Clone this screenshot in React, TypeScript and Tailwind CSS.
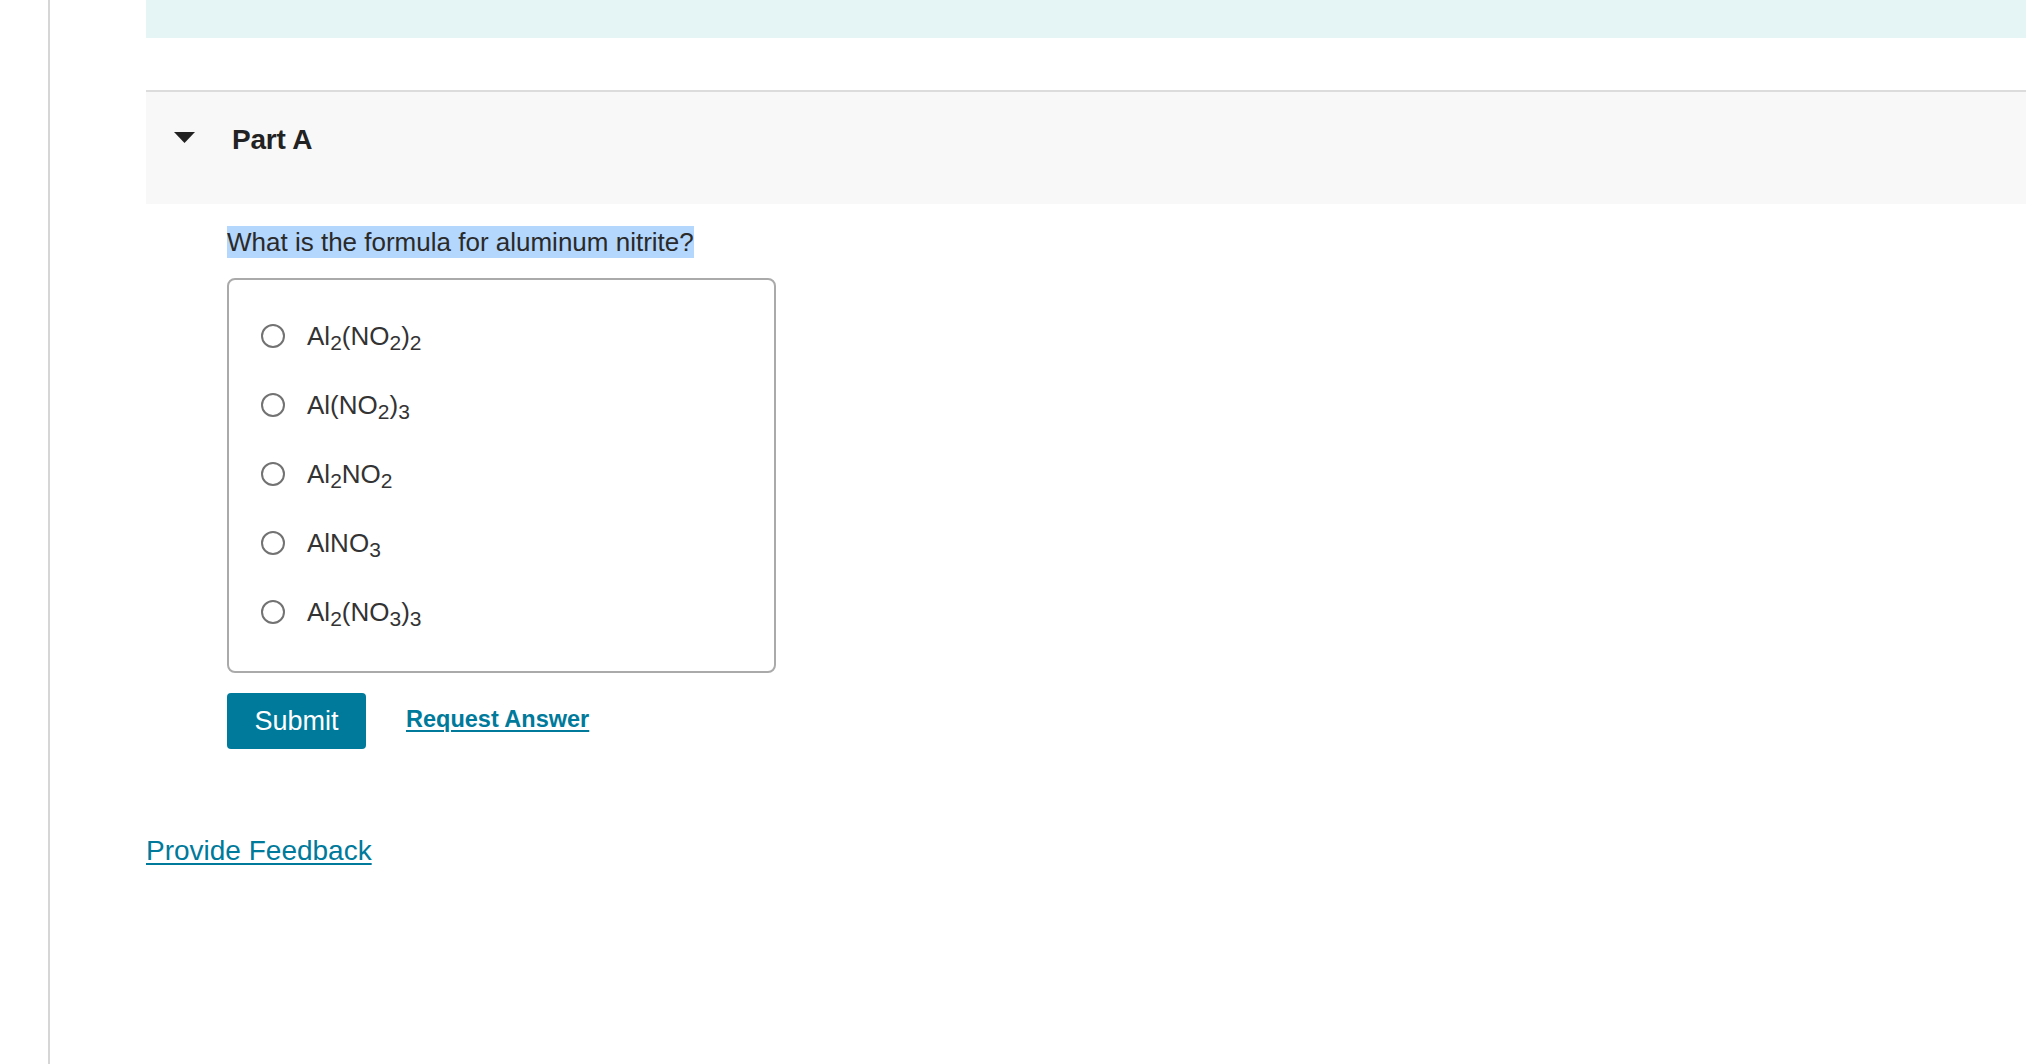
import React from "react";

const options: React.ReactNode[] = [
  <>Al<sub className="text-[21px]">2</sub>(NO<sub className="text-[21px]">2</sub>)<sub className="text-[21px]">2</sub></>,
  <>Al(NO<sub className="text-[21px]">2</sub>)<sub className="text-[21px]">3</sub></>,
  <>Al<sub className="text-[21px]">2</sub>NO<sub className="text-[21px]">2</sub></>,
  <>AlNO<sub className="text-[21px]">3</sub></>,
  <>Al<sub className="text-[21px]">2</sub>(NO<sub className="text-[21px]">3</sub>)<sub className="text-[21px]">3</sub></>,
];

export default function App() {
  return (
    <div
      className="flex min-h-[1064px] w-full bg-white text-[#333333]"
      style={{ fontFamily: '"Liberation Sans", Arial, Helvetica, sans-serif' }}
    >
      <div className="w-[50px] shrink-0 border-r-2 border-[#d6d6d6]" />
      <div className="ml-[96px] flex flex-1 flex-col">
        <div className="h-[38px] bg-[#e5f5f5]" />
        <div className="mt-[52px] h-[2px] bg-[#dcdcdc]" />
        <div className="flex h-[112px] items-start bg-[#f8f8f8] pt-[31px]">
          <div className="flex h-[34px] items-center">
            <svg width="21" height="11" viewBox="0 0 21 11" className="ml-[28px] mt-[-6px]">
              <polygon points="0,0 21,0 10.5,11" fill="#222222" />
            </svg>
            <span className="ml-[37px] text-[28px] font-bold leading-[34px] tracking-[-0.2px] text-[#222222]">
              Part A
            </span>
          </div>
        </div>
        <div className="ml-[81px] flex flex-col items-start">
          <div className="mt-[22px] h-[32px]">
            <span className="inline-block h-[32px] bg-[#b4d7fd] text-[26px] leading-[32px] text-[#2a2a2a]">
              What is the formula for aluminum nitrite?
            </span>
          </div>
          <div className="mt-[20px] flex w-[549px] flex-col rounded-[8px] border-2 border-[#aaaaaa] pb-[25px] pt-[21px]">
            {options.map((o, i) => (
              <label key={i} className="flex h-[69px] items-center">
                <span className="ml-[32px] box-border h-[24px] w-[24px] rounded-full border-2 border-[#727272] bg-white" />
                <span className="ml-[22px] text-[26px] leading-[30px] text-[#333333]">{o}</span>
              </label>
            ))}
          </div>
          <div className="mt-[20px] flex items-center">
            <button className="h-[56px] w-[139px] rounded-[4px] bg-[#007a9b] text-[27px] leading-[30px] text-white">
              Submit
            </button>
            <a className="mb-[4px] ml-[40px] text-[23.5px] font-bold leading-[28px] text-[#007a9b] underline decoration-2 underline-offset-[3px]">
              Request Answer
            </a>
          </div>
        </div>
        <div className="mt-[85px]">
          <a className="text-[28px] leading-[34px] text-[#007a9b] underline underline-offset-[3px]">
            Provide Feedback
          </a>
        </div>
      </div>
    </div>
  );
}
